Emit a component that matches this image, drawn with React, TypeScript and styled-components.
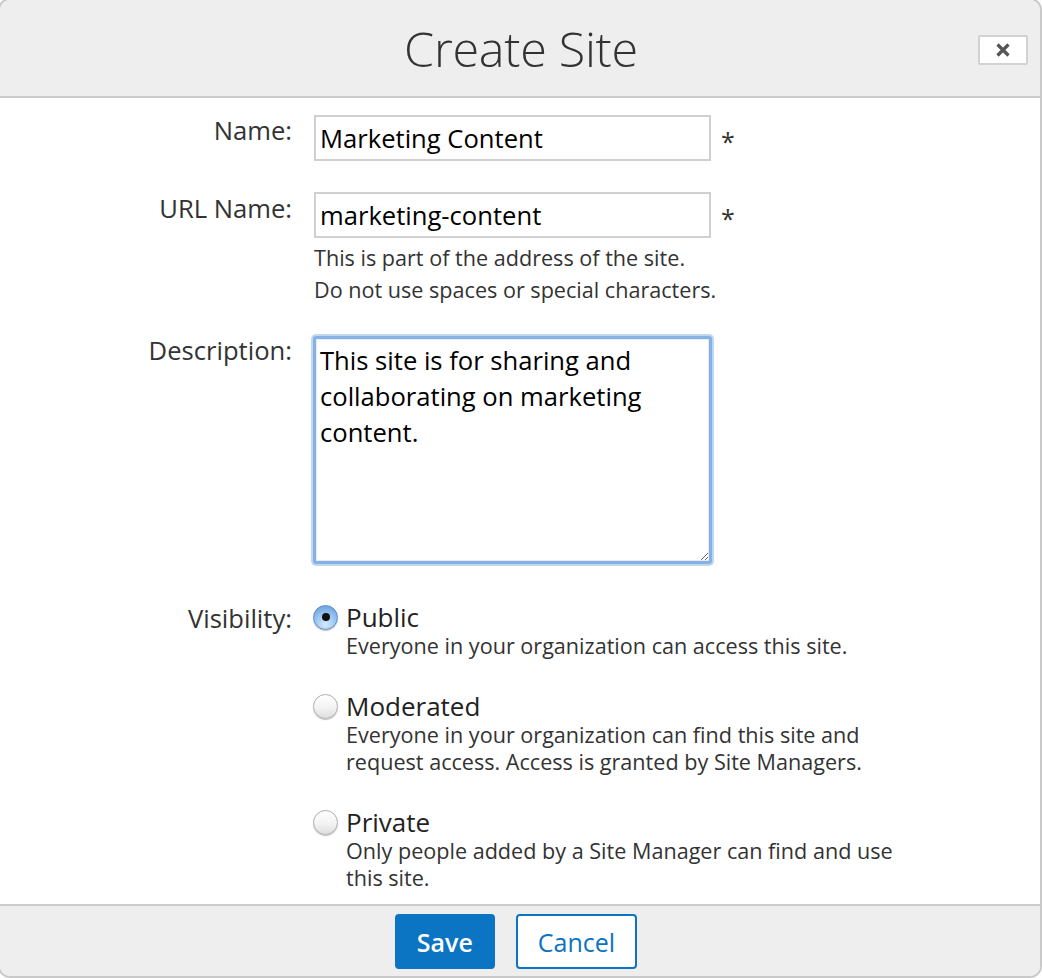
import React from "react";
import styled, { createGlobalStyle } from "styled-components";

const Global = createGlobalStyle`
  html, body { margin: 0; padding: 0; background: #ffffff; }
  body { font-family: "Open Sans", "Liberation Sans", sans-serif; color: #333; overflow: hidden; }
  * { box-sizing: border-box; }
`;

const Dialog = styled.div`
  width: 1044px;
  height: 980px;
  margin: -2px 0 0 -2px;
  border: 2px solid #c9c9c9;
  border-radius: 12px;
  overflow: hidden;
  display: flex;
  flex-direction: column;
  background: #fff;
`;

const Header = styled.div`
  height: 98px;
  flex: none;
  background: #eeeeee;
  border-bottom: 2px solid #cccccc;
  display: grid;
  grid-template-columns: 1fr auto 1fr;
  align-items: center;
`;

const Title = styled.h1`
  grid-column: 2;
  margin: 0;
  font-family: "Open Sans", sans-serif;
  font-weight: 300;
  font-size: 48.5px;
  color: #333;
  letter-spacing: -0.3px;
  padding-left: 2px;
`;

const CloseButton = styled.button`
  grid-column: 3;
  justify-self: end;
  margin-right: 12px;
  margin-top: 4px;
  width: 50px;
  height: 30px;
  background: #fff;
  border: 2px solid #d2d2d2;
  border-radius: 2px;
  display: flex;
  align-items: center;
  justify-content: center;
  padding: 0;
`;

const Body = styled.div`
  flex: 1;
  padding: 17px 0 0 0;
  display: grid;
  grid-template-columns: 292px 1fr;
  column-gap: 22px;
  align-content: start;
`;

const Label = styled.div<{ $top?: number }>`
  text-align: right;
  font-size: 25.6px;
  color: #333;
  padding-top: ${(p) => p.$top ?? 0}px;
  line-height: 30px;
  white-space: nowrap;
`;

const Field = styled.div<{ $mb?: number }>`
  display: flex;
  flex-direction: column;
  margin-bottom: ${(p) => p.$mb ?? 0}px;
`;

const InputRow = styled.div`
  display: flex;
  align-items: center;
`;

const TextInput = styled.input`
  width: 397px;
  height: 46px;
  border: 2px solid #d0d0d0;
  padding: 0 4px;
  font-family: "Open Sans", sans-serif;
  font-size: 25.6px;
  color: #000;
  outline: none;
`;

const Required = styled.span`
  margin-left: 10px;
  font-size: 25px;
  color: #333;
  padding-top: 6px;
`;

const Help = styled.div`
  font-size: 21.6px;
  line-height: 32px;
  color: #333;
  margin-top: 4px;
  white-space: nowrap;
`;

const TextArea = styled.textarea`
  width: 399px;
  height: 228px;
  margin: 4px 0 0 -1px;
  border: 3px solid #86b1e3;
  box-shadow: 0 0 0 2px #c0d7f2, inset 0 0 0 1px #e4ecf6;
  border-radius: 3px;
  padding: 4px 4px 2px;
  font-family: "Open Sans", sans-serif;
  font-size: 25.6px;
  line-height: 36px;
  color: #000;
  outline: none;
  resize: both;
`;

const Options = styled.div`
  display: flex;
  flex-direction: column;
  gap: 32px;
  margin-left: -1px;
`;

const Option = styled.label`
  display: grid;
  grid-template-columns: 25px 1fr;
  column-gap: 8px;
  align-items: center;
`;

const Radio = styled.span<{ $checked?: boolean }>`
  width: 25px;
  height: 25px;
  border-radius: 50%;
  display: flex;
  align-items: center;
  justify-content: center;
  border: 1px solid ${(p) => (p.$checked ? "#5f8cc6" : "#b0b0b0")};
  background: ${(p) =>
    p.$checked
      ? "radial-gradient(circle at 50% 80%, #d6ebfd 0%, #96c3f0 50%, #5e98da 100%)"
      : "linear-gradient(#ffffff, #f3f3f3 55%, #dedede)"};
  box-shadow: 0 1px 1px rgba(0, 0, 0, 0.25);
  &::after {
    content: "";
    display: ${(p) => (p.$checked ? "block" : "none")};
    width: 8px;
    height: 8px;
    border-radius: 50%;
    background: #111;
  }
`;

const OptionTitle = styled.span`
  font-size: 26px;
  line-height: 30px;
  color: #222;
`;

const OptionDesc = styled.span`
  grid-column: 2;
  font-size: 21.6px;
  line-height: 27px;
  color: #333;
  max-width: 560px;
`;

const Footer = styled.div`
  height: 72px;
  flex: none;
  background: #eeeeee;
  border-top: 2px solid #cccccc;
  display: flex;
  justify-content: center;
  align-items: flex-start;
  padding: 8px 8px 0 0;
  gap: 21px;
`;

const Button = styled.button<{ $primary?: boolean }>`
  height: 55px;
  padding: 0 20px;
  border-radius: 4px;
  font-family: "Open Sans", sans-serif;
  font-size: 25px;
  font-weight: ${(p) => (p.$primary ? 600 : 400)};
  color: ${(p) => (p.$primary ? "#ffffff" : "#0b73c2")};
  background: ${(p) => (p.$primary ? "#0b74c3" : "#ffffff")};
  border: 2px solid #0b74c3;
`;

export default function App() {
  return (
    <>
      <Global />
      <Dialog>
        <Header>
          <Title>Create Site</Title>
          <CloseButton aria-label="Close">
            <svg width="16" height="16" viewBox="0 0 16 16">
              <path d="M2.5 2.5 L13.5 13.5 M13.5 2.5 L2.5 13.5" stroke="#555" strokeWidth="3.2" strokeLinecap="butt" />
            </svg>
          </CloseButton>
        </Header>
        <Body>
          <Label $top={1}>Name:</Label>
          <Field $mb={31}>
            <InputRow>
              <TextInput defaultValue="Marketing Content" />
              <Required>*</Required>
            </InputRow>
          </Field>

          <Label $top={2}>URL Name:</Label>
          <Field $mb={26}>
            <InputRow>
              <TextInput defaultValue="marketing-content" />
              <Required>*</Required>
            </InputRow>
            <Help>
              This is part of the address of the site.
              <br />
              Do not use spaces or special characters.
            </Help>
          </Field>

          <Label $top={4}>Description:</Label>
          <Field $mb={38}>
            <TextArea defaultValue={"This site is for sharing and collaborating on marketing content."} />
          </Field>

          <Label $top={2}>Visibility:</Label>
          <Options>
            <Option>
              <Radio $checked />
              <OptionTitle>Public</OptionTitle>
              <OptionDesc>Everyone in your organization can access this site.</OptionDesc>
            </Option>
            <Option>
              <Radio />
              <OptionTitle>Moderated</OptionTitle>
              <OptionDesc>
                Everyone in your organization can find this site and request access. Access is granted by Site Managers.
              </OptionDesc>
            </Option>
            <Option>
              <Radio />
              <OptionTitle>Private</OptionTitle>
              <OptionDesc>Only people added by a Site Manager can find and use this site.</OptionDesc>
            </Option>
          </Options>
        </Body>
        <Footer>
          <Button $primary>Save</Button>
          <Button>Cancel</Button>
        </Footer>
      </Dialog>
    </>
  );
}
